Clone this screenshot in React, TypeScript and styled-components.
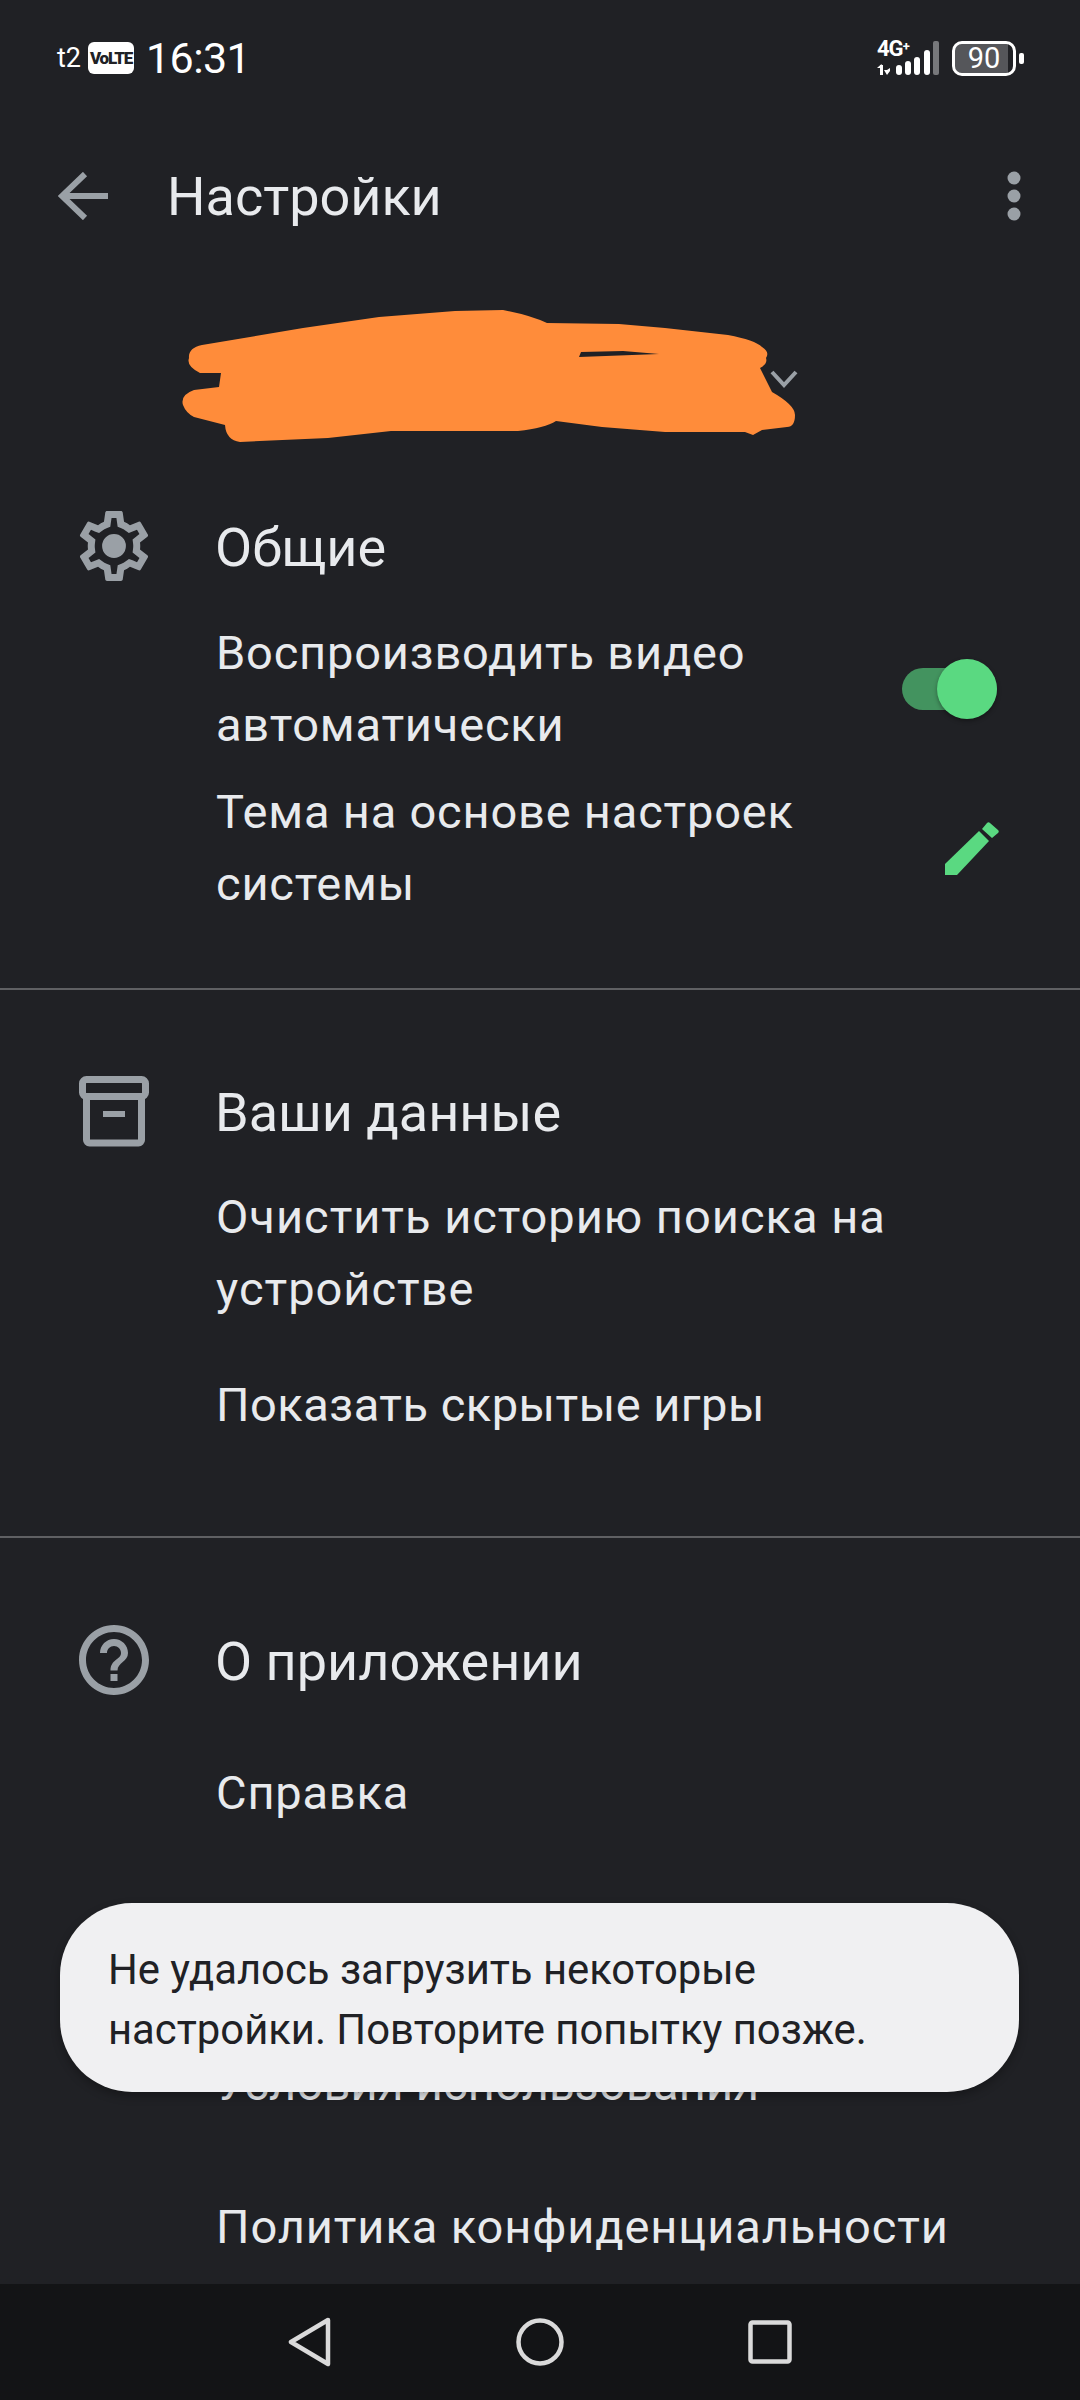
import React from 'react'
import styled, { createGlobalStyle } from 'styled-components'

const Global = createGlobalStyle`
  html, body {
    margin: 0;
    padding: 0;
    background: #202125;
  }
`

const Screen = styled.div`
  position: relative;
  width: 1080px;
  height: 2400px;
  overflow: hidden;
  display: flex;
  flex-direction: column;
  background: #202125;
  color: #e8eaed;
  font-family: Roboto, 'Noto Sans', sans-serif;
`

const StatusBar = styled.div`
  height: 116px;
  flex: none;
  padding: 0 56px 0 57px;
  display: flex;
  align-items: center;
  justify-content: space-between;
`

const StatusLeft = styled.div`
  display: flex;
  align-items: center;
`

const Carrier = styled.span`
  font-size: 27px;
  color: #fff;
`

const Volte = styled.span`
  width: 46px;
  height: 32px;
  margin-left: 7px;
  border-radius: 6px;
  background: #fff;
  color: #202125;
  font-size: 17px;
  font-weight: 900;
  letter-spacing: -1.2px;
  display: flex;
  align-items: center;
  justify-content: center;
`

const Clock = styled.span`
  margin-left: 12px;
  font-size: 43px;
  letter-spacing: -0.6px;
  color: #fff;
`

const StatusRight = styled.div`
  display: flex;
  align-items: center;
`

const Network = styled.div`
  position: relative;
  width: 62px;
  height: 34px;
`

const NetworkLabel = styled.span`
  position: absolute;
  left: 0;
  top: -1px;
  color: #fff;
  font-size: 22px;
  font-weight: 700;
  letter-spacing: -1px;
  line-height: 18px;
`

const NetworkPlus = styled.span`
  position: relative;
  top: -5px;
  font-size: 13px;
`

const Battery = styled.div`
  width: 64px;
  height: 35px;
  box-sizing: border-box;
  margin-left: 13px;
  border: 3px solid #fff;
  border-radius: 10px;
  color: #fff;
  font-size: 29px;
  display: flex;
  align-items: center;
  justify-content: center;
  background: linear-gradient(to right, #55565a 91%, transparent 91%);
  background-clip: padding-box;
`

const BatteryCap = styled.div`
  width: 5px;
  height: 11px;
  margin-left: 3px;
  border-radius: 2px;
  background: #fff;
`

const AppBar = styled.div`
  height: 160px;
  flex: none;
  padding: 0 58px;
  display: flex;
  align-items: center;
`

const Title = styled.div`
  margin-left: 59px;
  flex: 1;
  font-size: 54px;
  color: #e8eaed;
`

const Account = styled.div`
  position: relative;
  height: 228px;
  flex: none;
`

const Blob = styled.svg`
  position: absolute;
  left: 0;
  top: -276px;
`

const List = styled.div`
  flex: 1;
  overflow: hidden;
`

const Section = styled.section<{ $line?: boolean }>`
  padding: 0 81px 0 72px;
  border-bottom: ${(p) => (p.$line ? '2px solid #5f6063' : 'none')};
`

const Heading = styled.div<{ $top: number }>`
  margin-top: ${(p) => p.$top}px;
  display: flex;
  align-items: center;
  height: 84px;
`

const HeadingIcon = styled.div`
  width: 84px;
  height: 84px;
  flex: none;
  margin-right: 59px;
  color: #9aa0a6;
`

const HeadingText = styled.div`
  padding-top: 3px;
  font-size: 54px;
  color: #e8eaed;
`

const Row = styled.div<{ $top: number; $bottom?: number }>`
  margin-top: ${(p) => p.$top}px;
  margin-bottom: ${(p) => p.$bottom || 0}px;
  padding-left: 144px;
  display: flex;
  align-items: center;
  justify-content: space-between;
`

const RowText = styled.div<{ $spacing?: number }>`
  font-size: 47px;
  line-height: 72px;
  letter-spacing: ${(p) => p.$spacing ?? 0.8}px;
  color: #e8eaed;
  max-width: 620px;
`

const RowWide = styled(RowText)`
  max-width: none;
  white-space: nowrap;
`

const Toggle = styled.div`
  position: relative;
  width: 95px;
  height: 42px;
  margin-right: 2px;
  border-radius: 21px;
  background: #43935f;
`

const Knob = styled.div`
  position: absolute;
  right: 0;
  top: -9px;
  width: 60px;
  height: 60px;
  border-radius: 50%;
  background: #5ad981;
  box-shadow: 0 2px 4px rgba(0, 0, 0, 0.35);
`

const Toast = styled.div`
  position: absolute;
  left: 60px;
  top: 1903px;
  width: 959px;
  height: 189px;
  box-sizing: border-box;
  padding: 37px 20px 0 48px;
  border-radius: 72px;
  background: #f0f0f2;
  color: #202125;
  font-size: 41.8px;
  line-height: 60px;
  white-space: nowrap;
  box-shadow: 0 4px 10px rgba(0, 0, 0, 0.3);
`

const NavBar = styled.div`
  height: 116px;
  flex: none;
  background: #131416;
  display: flex;
  align-items: center;
  justify-content: center;
  gap: 184px;
`

const Gear = () => (
  <svg width="84" height="84" viewBox="0 0 24 24" fill="currentColor">
    <path d="M19.43 12.98c.04-.32.07-.64.07-.98 0-.34-.03-.66-.07-.98l2.11-1.65c.19-.15.24-.42.12-.64l-2-3.46c-.09-.16-.26-.25-.44-.25-.06 0-.12.01-.17.03l-2.49 1c-.52-.4-1.08-.73-1.69-.98l-.38-2.65C14.46 2.18 14.25 2 14 2h-4c-.25 0-.46.18-.49.42l-.38 2.65c-.61.25-1.17.59-1.69.98l-2.49-1c-.06-.02-.12-.03-.18-.03-.17 0-.34.09-.43.25l-2 3.46c-.13.22-.07.49.12.64l2.11 1.65c-.04.32-.07.65-.07.98 0 .33.03.66.07.98l-2.11 1.65c-.19.15-.24.42-.12.64l2 3.46c.09.16.26.25.44.25.06 0 .12-.01.17-.03l2.49-1c.52.4 1.08.73 1.69.98l.38 2.65c.03.24.24.42.49.42h4c.25 0 .46-.18.49-.42l.38-2.65c.61-.25 1.17-.59 1.69-.98l2.49 1c.06.02.12.03.18.03.17 0 .34-.09.43-.25l2-3.46c.12-.22.07-.49-.12-.64l-2.11-1.65zm-1.98-1.71c.04.31.05.52.05.73 0 .21-.02.43-.05.73l-.14 1.13.89.7 1.08.84-.7 1.21-1.27-.51-1.04-.42-.9.68c-.43.32-.84.56-1.25.73l-1.06.43-.16 1.13-.2 1.35h-1.4l-.19-1.35-.16-1.13-1.06-.43c-.43-.18-.83-.41-1.23-.71l-.91-.7-1.06.43-1.27.51-.7-1.21 1.08-.84.89-.7-.14-1.13c-.03-.31-.05-.54-.05-.74s.02-.43.05-.73l.14-1.13-.89-.7-1.08-.84.7-1.21 1.27.51 1.04.42.9-.68c.43-.32.84-.56 1.25-.73l1.06-.43.16-1.13.2-1.35h1.39l.19 1.35.16 1.13 1.06.43c.43.18.83.41 1.23.71l.91.7 1.06-.43 1.27-.51.7 1.21-1.07.85-.89.7.14 1.13zM12 8.600a3.400 3.400 0 1 0 0 6.800 3.400 3.400 0 0 0 0-6.800z" />
  </svg>
)

const ArchiveIcon = () => (
  <svg width="84" height="84" viewBox="0 0 84 84" fill="none" stroke="currentColor" strokeWidth="7">
    <rect x="10.500" y="10.500" width="63" height="17" rx="4" />
    <path d="M14.500 28v43a3 3 0 0 0 3 3h49a3 3 0 0 0 3-3V28" />
    <rect x="31" y="42" width="22" height="6" fill="currentColor" stroke="none" />
  </svg>
)

const HelpIcon = () => (
  <svg width="84" height="84" viewBox="0 0 24 24" fill="currentColor">
    <path d="M11 18h2v-2h-2v2zm1-16C6.48 2 2 6.48 2 12s4.48 10 10 10 10-4.48 10-10S17.52 2 12 2zm0 18c-4.41 0-8-3.59-8-8s3.59-8 8-8 8 3.59 8 8-3.59 8-8 8zm0-14c-2.21 0-4 1.79-4 4h2c0-1.1.9-2 2-2s2 .9 2 2c0 2-3 1.75-3 5h2c0-2.25 3-2.5 3-5 0-2.21-1.79-4-4-4z" />
  </svg>
)

const Pencil = () => (
  <svg width="54" height="54" viewBox="0 0 54 54" fill="#5ad981">
    <path d="M0 54V43L34 10l10 10L12 54z" />
    <path d="M37 8l5-6c1-1 2-1 3 0l8 7c1 1 1 2 0 3l-6 5z" />
  </svg>
)

export default function App() {
  return (
    <Screen>
      <Global />
      <StatusBar>
        <StatusLeft>
          <Carrier>t2</Carrier>
          <Volte>VoLTE</Volte>
          <Clock>16:31</Clock>
        </StatusLeft>
        <StatusRight>
          <Network>
            <NetworkLabel>
              4G<NetworkPlus>+</NetworkPlus>
            </NetworkLabel>
            <svg width="62" height="34" viewBox="0 0 62 34" fill="#fff">
              <path d="M3 24h3v10H3zM0 27l4.500-4 1 4zM10 34l-3-5h3l3-2v3z" />
              <rect x="19" y="24" width="6" height="10" rx="3" />
              <rect x="28" y="20" width="6" height="14" rx="3" />
              <rect x="37" y="16" width="6" height="18" rx="3" />
              <rect x="47" y="9" width="6" height="25" rx="3" />
              <rect x="56" y="0" width="6" height="34" rx="2" fill="#77787b" />
            </svg>
          </Network>
          <Battery>90</Battery>
          <BatteryCap />
        </StatusRight>
      </StatusBar>

      <AppBar>
        <svg width="50" height="48" viewBox="0 0 50 48" fill="none" stroke="#9aa0a6" strokeWidth="6">
          <path d="M27 2 4 24l23 22M4 24h46" />
        </svg>
        <Title>Настройки</Title>
        <svg width="16" height="50" viewBox="0 0 16 50" fill="#9aa0a6">
          <circle cx="8" cy="7" r="6.500" />
          <circle cx="8" cy="25" r="6.500" />
          <circle cx="8" cy="43" r="6.500" />
        </svg>
      </AppBar>

      <Account>
        <Blob width="1080" height="500" viewBox="0 0 1080 500">
          <path
            fill="#ff8c3a"
            fillRule="evenodd"
            d="M202 345 303 328 379 317 455 311 503 310Q530 315 547 323L619 324 665 328 728 335Q755 340 762 347 770 352 766 358 768 364 760 368L772 392Q795 405 795 415 795 427 787 427L762 430 753 435 745 432 665 432 602 427 556 421Q545 428 518 431L391 431 328 438 240 442Q226 440 225 425L194 417Q186 413 183 405 180 395 194 390L219 387 221 373 200 373Q186 366 189 358 188 348 202 345ZM581 352 623 351 659 354 579 357Z"
          />
          <path d="M772 372l12 13 12-13" fill="none" stroke="#9aa0a6" strokeWidth="4" />
        </Blob>
      </Account>

      <List>
        <Section $line>
          <Heading $top={0}>
            <HeadingIcon>
              <Gear />
            </HeadingIcon>
            <HeadingText>Общие</HeadingText>
          </Heading>
          <Row $top={29}>
            <RowText>Воспроизводить видео автоматически</RowText>
            <Toggle>
              <Knob />
            </Toggle>
          </Row>
          <Row $top={15} $bottom={68}>
            <RowText>Тема на основе настроек системы</RowText>
            <Pencil />
          </Row>
        </Section>
        <Section $line>
          <Heading $top={79}>
            <HeadingIcon>
              <ArchiveIcon />
            </HeadingIcon>
            <HeadingText>Ваши данные</HeadingText>
          </Heading>
          <Row $top={28}>
            <RowWide $spacing={1}>
              Очистить историю поиска на
              <br />
              устройстве
            </RowWide>
          </Row>
          <Row $top={44} $bottom={95}>
            <RowWide $spacing={0.5}>Показать скрытые игры</RowWide>
          </Row>
        </Section>
        <Section>
          <Heading $top={80}>
            <HeadingIcon>
              <HelpIcon />
            </HeadingIcon>
            <HeadingText>О приложении</HeadingText>
          </Heading>
          <Row $top={55}>
            <RowWide>Справка</RowWide>
          </Row>
          <Row $top={219}>
            <RowWide $spacing={0.2}>Условия использования</RowWide>
          </Row>
          <Row $top={71}>
            <RowWide $spacing={0.9}>Политика конфиденциальности</RowWide>
          </Row>
        </Section>
      </List>

      <Toast>
        Не удалось загрузить некоторые
        <br />
        настройки. Повторите попытку позже.
      </Toast>

      <NavBar>
        <svg width="44" height="50" viewBox="0 0 44 50" fill="none" stroke="#dadada" strokeWidth="4.500" strokeLinejoin="round">
          <path d="M40 3 3 25l37 22z" />
        </svg>
        <svg width="48" height="48" viewBox="0 0 48 48" fill="none" stroke="#dadada" strokeWidth="4.500">
          <circle cx="24" cy="24" r="21.500" />
        </svg>
        <svg width="44" height="44" viewBox="0 0 44 44" fill="none" stroke="#dadada" strokeWidth="4.500">
          <rect x="2.500" y="2.500" width="39" height="39" rx="2" />
        </svg>
      </NavBar>
    </Screen>
  )
}
